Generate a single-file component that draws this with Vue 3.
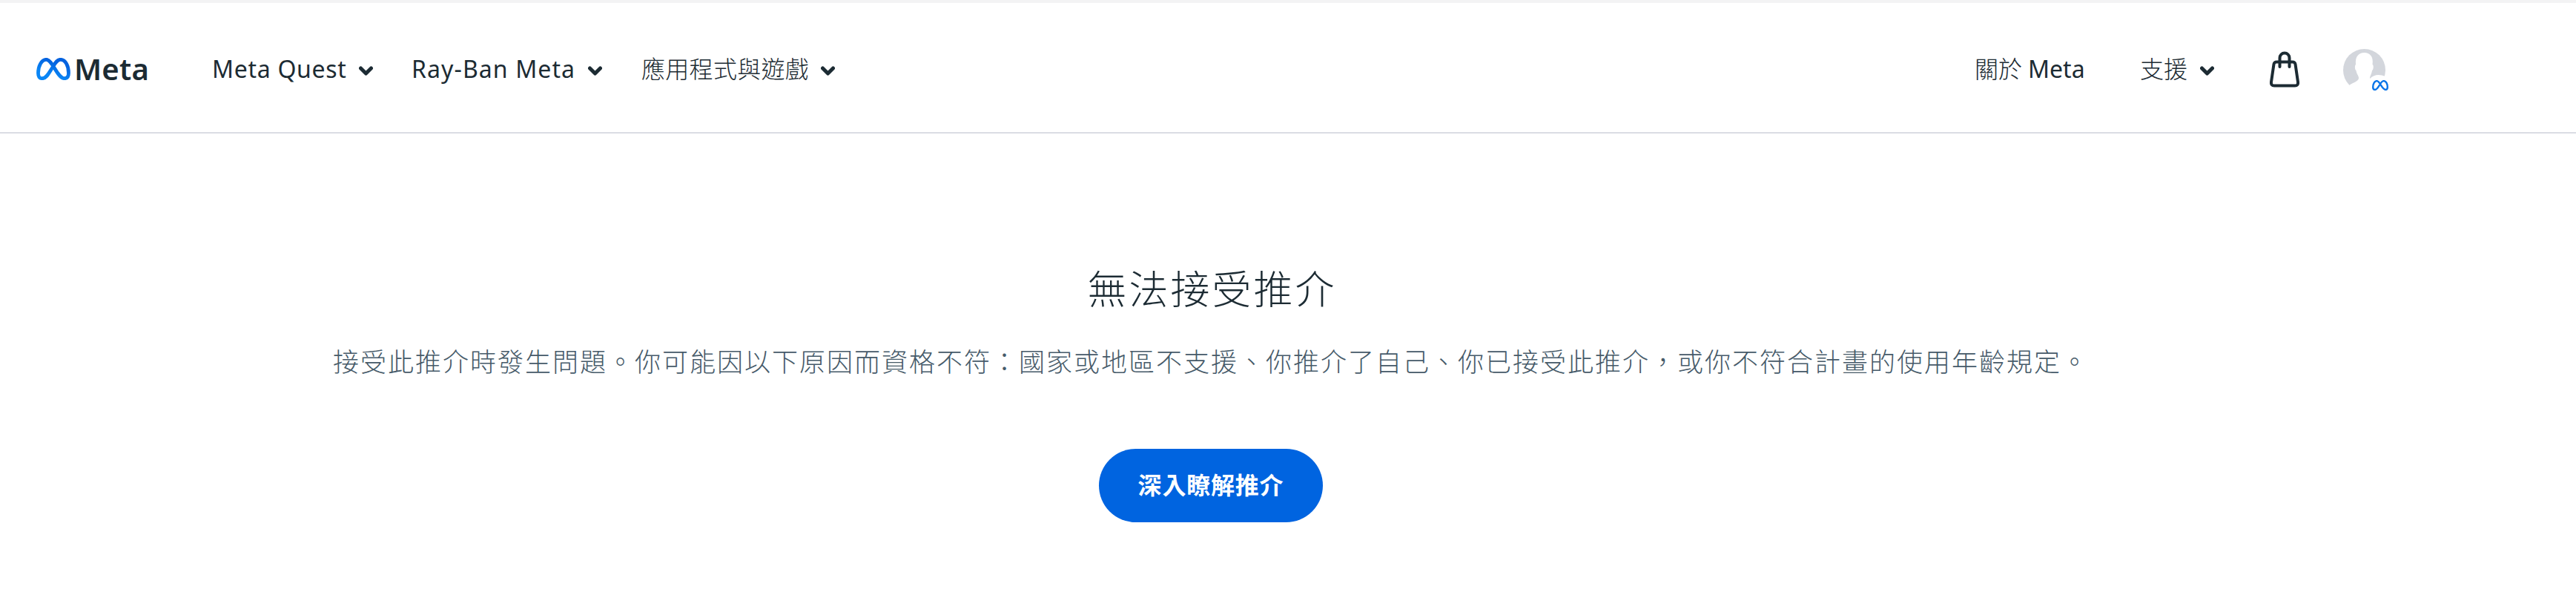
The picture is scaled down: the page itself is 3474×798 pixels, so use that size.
<script setup>
const leftMenu = [
  { label: 'Meta Quest', cls: 'quest' },
  { label: 'Ray-Ban Meta', cls: 'rayban' },
  { label: '應用程式與遊戲', cls: 'apps' }
]
</script>

<template>
  <div class="page">
    <header class="header">
      <a class="logo">
        <svg class="logo-mark" viewBox="0 0 46 30" preserveAspectRatio="none">
          <defs>
            <linearGradient id="metaBlue" x1="0" y1="1" x2="0.6" y2="0">
              <stop offset="0.3" stop-color="#0a86f5" />
              <stop offset="0.9" stop-color="#0462df" />
            </linearGradient>
          </defs>
          <path d="M23 11C17 20 14 27.700 8 27.700C4 27.700 2.500 25 2.500 20.500C2.500 11 7 2.300 13.500 2.300C22 2.300 28 27.700 38 27.700C42 27.700 43.500 25 43.500 20.500C43.500 11 39.500 2.300 32.500 2.300C28.500 2.300 26 6 23 11" />
        </svg>
        <span class="logo-text">Meta</span>
      </a>
      <nav class="menu">
        <a v-for="item in leftMenu" :key="item.cls" class="item" :class="item.cls">
          <span class="label">{{ item.label }}</span>
          <svg class="chevron" viewBox="0 0 19 13"><path d="M2.500 3L9.500 10L16.500 3" /></svg>
        </a>
      </nav>
      <nav class="right">
        <a class="item about"><span class="label zh">關於</span><span class="label">Meta</span></a>
        <a class="item support">
          <span class="label zh">支援</span>
          <svg class="chevron" viewBox="0 0 19 13"><path d="M2.500 3L9.500 10L16.500 3" /></svg>
        </a>
        <svg class="bag" viewBox="0 0 40 50">
          <path d="M9.500 14.500H30.500Q34 14.500 34.500 17.500L38 41.500Q38.500 46.500 34 46.500H6Q1.500 46.500 2 41.500L5.500 17.500Q6 14.500 9.500 14.500Z" />
          <path d="M13.500 21V9A6.500 6.500 0 0 1 26.500 9V21" />
        </svg>
        <div class="avatar">
          <svg class="person" viewBox="0 0 57 57">
            <circle cx="28.500" cy="28.500" r="28.500" fill="#d3d6dc" />
            <path d="M8 49C13 45 21 44 21 39C21 36 18 34 17.500 29C15.500 28 15.500 22 17 21C16 10 21 5 28.500 5C36 5 41 10 39.500 21C41.500 22 41 28 39 29C38.500 34 36 36 36 40C42 34 49 34 57 37V57H0Z" fill="#fff" />
          </svg>
          <svg class="badge" viewBox="0 0 46 30" preserveAspectRatio="none">
            <path d="M23 11C17 20 14 27.700 8 27.700C4 27.700 2.500 25 2.500 20.500C2.500 11 7 2.300 13.500 2.300C22 2.300 28 27.700 38 27.700C42 27.700 43.500 25 43.500 20.500C43.500 11 39.500 2.300 32.500 2.300C28.500 2.300 26 6 23 11" />
          </svg>
        </div>
      </nav>
    </header>
    <main class="content">
      <h1>無法接受推介</h1>
      <p>接受此推介時發生問題。你可能因以下原因而資格不符：國家或地區不支援、你推介了自己、你已接受此推介，或你不符合計畫的使用年齡規定。</p>
      <a class="button">深入瞭解推介</a>
    </main>
  </div>
</template>

<style>
body {
  margin: 0;
  background: #fff;
}
</style>

<style scoped>
.page {
  height: 798px;
  overflow: hidden;
  box-sizing: border-box;
  border-top: 4px solid #f3f3f4;
  background: #fff;
  color: #1c2b33;
  font-family: "Noto Sans", "Noto Sans CJK TC", sans-serif;
}
.header {
  display: flex;
  align-items: center;
  height: 176px;
  box-sizing: border-box;
  padding: 0 253px 0 49px;
  border-bottom: 2px solid #dadde4;
}
.logo {
  display: flex;
  align-items: center;
  width: 237px;
  flex: none;
  padding-top: 4px;
}
.logo-mark {
  width: 46px;
  height: 30px;
  margin-right: 5px;
}
.logo-mark path {
  fill: none;
  stroke: url(#metaBlue);
  stroke-width: 4.8;
}
.logo-text {
  font-size: 40px;
  line-height: 40px;
  font-weight: 600;
  letter-spacing: 0.2px;
}
.menu,
.right {
  display: flex;
  align-items: center;
}
.right {
  margin-left: auto;
}
.item {
  display: flex;
  align-items: center;
  font-size: 32px;
  line-height: 44px;
  font-weight: 400;
}
.label {
  white-space: nowrap;
  padding-top: 3px;
}
.apps .label,
.zh {
  padding-top: 0;
  font-family: "Noto Sans CJK TC", sans-serif;
  font-weight: 300;
}
.chevron {
  width: 19px;
  height: 13px;
  flex: none;
  margin-top: 9px;
  margin-left: auto;
}
.chevron path {
  fill: none;
  stroke: #1c2b33;
  stroke-width: 5;
  stroke-linecap: round;
  stroke-linejoin: round;
}
.quest {
  width: 217px;
  margin-right: 52px;
}
.quest .label {
  letter-spacing: 0.7px;
}
.rayban {
  width: 257px;
  margin-right: 53px;
}
.rayban .label {
  letter-spacing: 1.1px;
}
.apps {
  width: 261px;
}
.apps .label {
  letter-spacing: 0.3px;
}
.about {
  width: 223px;
  gap: 8px;
}
.support {
  width: 100px;
  margin-right: 75px;
}
.bag {
  width: 40px;
  height: 50px;
  margin-top: 6px;
}
.bag path {
  fill: none;
  stroke: #1c2b33;
  stroke-width: 4;
  stroke-linecap: round;
}
.avatar {
  position: relative;
  width: 61px;
  height: 57px;
  margin-left: 59px;
  margin-top: 7px;
}
.person {
  display: block;
  width: 57px;
  height: 57px;
}
.badge {
  position: absolute;
  left: 39px;
  top: 42px;
  width: 22px;
  height: 14px;
}
.badge path {
  fill: none;
  stroke: #0874e8;
  stroke-width: 5;
}
.content {
  width: 3266px;
  display: flex;
  flex-direction: column;
  align-items: center;
  padding-top: 171px;
  font-family: "Noto Sans CJK TC", sans-serif;
}
h1 {
  margin: 0 0 0 3px;
  font-size: 53px;
  line-height: 72px;
  font-weight: 300;
  letter-spacing: 3px;
}
p {
  margin: 35px 0 0;
  font-size: 35px;
  line-height: 56px;
  font-weight: 300;
  letter-spacing: 2px;
  color: #465a69;
  white-space: nowrap;
}
.button {
  display: flex;
  align-items: center;
  justify-content: center;
  width: 302px;
  height: 99px;
  box-sizing: border-box;
  padding-bottom: 6px;
  margin-top: 91px;
  border-radius: 50px;
  background: #0064e0;
  color: #fff;
  font-size: 32px;
  font-weight: 700;
  letter-spacing: 0.8px;
}
</style>
